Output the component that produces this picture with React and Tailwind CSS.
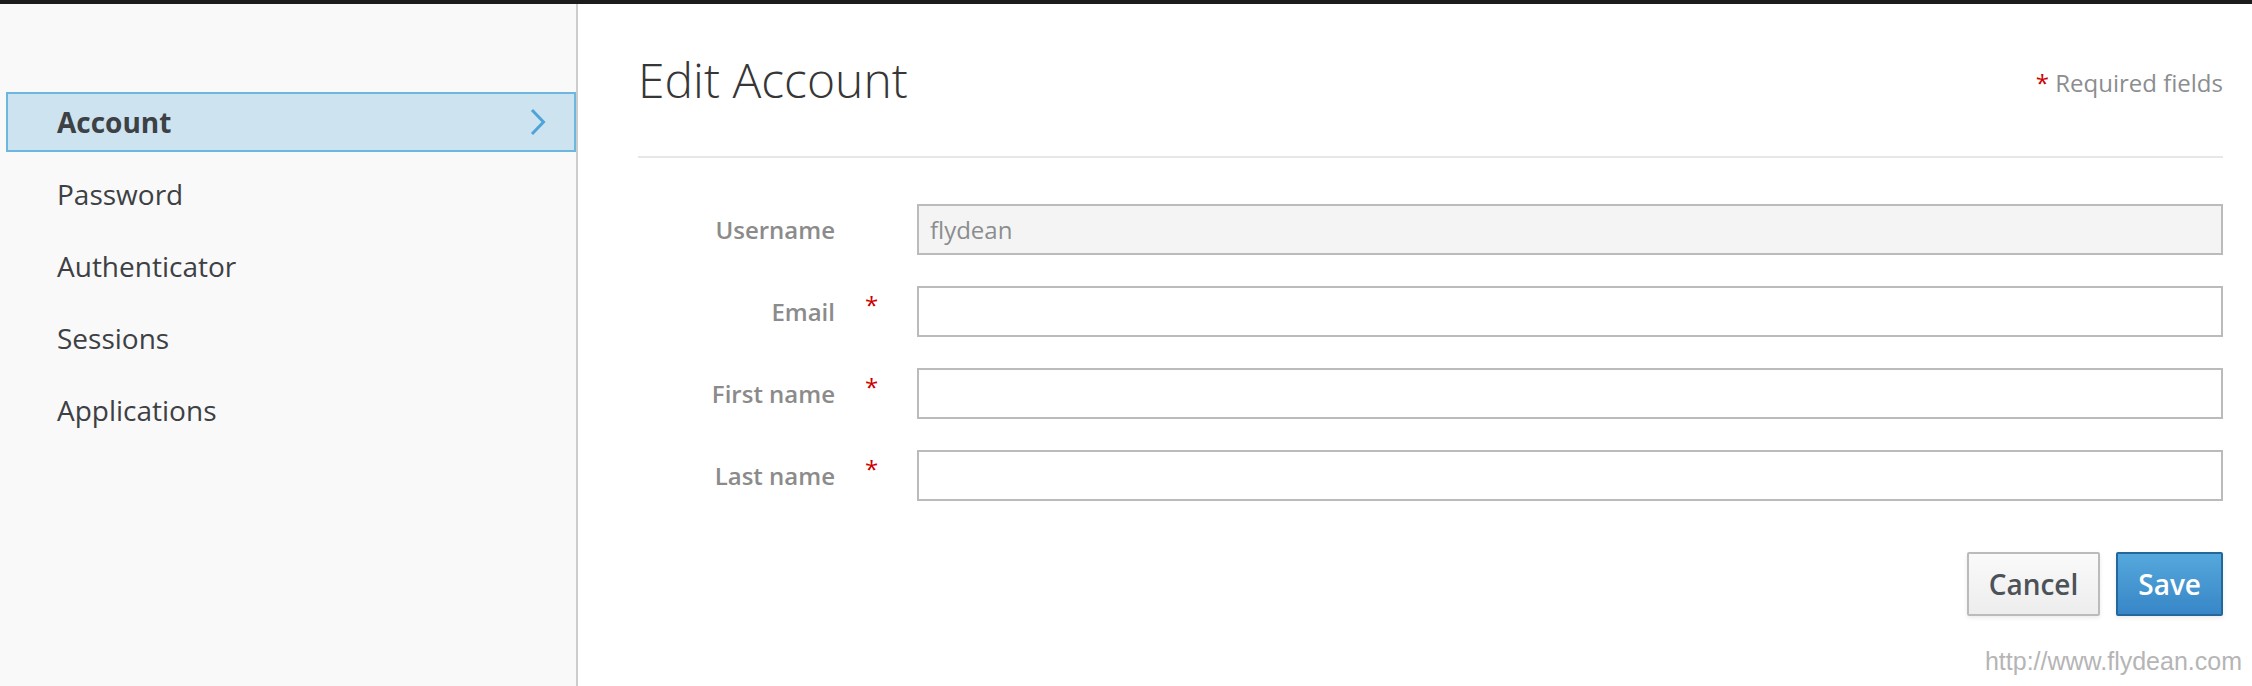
import React from 'react';

const MENU = ['Account', 'Password', 'Authenticator', 'Sessions', 'Applications'];

const FIELDS = [
  { id: 'username', label: 'Username', value: 'flydean', required: false, readOnly: true },
  { id: 'email', label: 'Email', value: '', required: true },
  { id: 'firstName', label: 'First name', value: '', required: true },
  { id: 'lastName', label: 'Last name', value: '', required: true },
];

function Chevron() {
  return (
    <svg width="16" height="28" viewBox="0 0 16 28" fill="none">
      <polyline points="2,2 13.5,14 2,26" stroke="#4ea4d9" strokeWidth="3" />
    </svg>
  );
}

function Sidebar({ active }) {
  return (
    <aside className="w-[578px] shrink-0 bg-[#f9f9f9] border-r-2 border-[#cdcdcd] pt-[88px]">
      <ul className="flex flex-col gap-[12px] pl-[6px]">
        {MENU.map((item) =>
          item === active ? (
            <li
              key={item}
              className="h-[60px] flex items-center justify-between border-2 border-[#6bb7dd] bg-[#cde3ef] pl-[49px] pr-[28px] text-[28px] font-bold text-[#3d4044]"
            >
              <span>{item}</span>
              <Chevron />
            </li>
          ) : (
            <li
              key={item}
              className="h-[60px] flex items-center border-2 border-transparent pl-[49px] text-[28px] text-[#3d4044]"
            >
              {item}
            </li>
          )
        )}
      </ul>
    </aside>
  );
}

export default function App() {
  return (
    <div className="relative w-[2252px] h-[686px] flex flex-col bg-white font-['Open_Sans',sans-serif] overflow-hidden">
      <div className="h-[4px] bg-[#1c1c1c] shrink-0" />
      <div className="flex flex-1">
        <Sidebar active="Account" />

        <main className="flex-1 pl-[60px] pr-[29px]">
          {/* page header */}
          <div className="flex justify-between items-start border-b-2 border-[#e7e7e7] pt-[49px] pb-[50px]">
            <h1 className="text-[48px] leading-[53px] font-light text-[#363636]">Edit Account</h1>
            <div className="mt-[13px] text-[24px] leading-[33px] text-[#8b8d8f]">
              <span className="text-[#cc0000]">*</span> Required fields
            </div>
          </div>

          <form className="pt-[46px]">
            <div className="flex flex-col gap-[31px]">
              {FIELDS.map((f) => (
                <div key={f.id} className="flex h-[51px]">
                  <label
                    htmlFor={f.id}
                    className="w-[197px] shrink-0 flex items-center justify-end text-[24px] font-semibold text-[#8b8b8b]"
                  >
                    {f.label}
                  </label>
                  <div className="w-[82px] shrink-0 pl-[30px] pt-[2px] text-[24px] leading-[33px] text-[#cc0000]">
                    {f.required ? '*' : ''}
                  </div>
                  <input
                    id={f.id}
                    type="text"
                    defaultValue={f.value}
                    readOnly={f.readOnly}
                    className={
                      'flex-1 h-[51px] border-2 border-[#bbbbbb] px-[11px] text-[24px] text-[#8b8d8f] outline-none ' +
                      (f.readOnly ? 'bg-[#f4f4f4]' : 'bg-white')
                    }
                  />
                </div>
              ))}
            </div>

            <div className="flex justify-end gap-[16px] mt-[51px]">
              <button
                type="button"
                className="h-[64px] px-[20px] border-2 border-[#bbbbbb] rounded-[2px] bg-gradient-to-b from-[#fafafa] to-[#ededed] text-[28px] font-semibold text-[#4d5258] shadow-[0_2px_4px_rgba(0,0,0,0.08)]"
              >
                Cancel
              </button>
              <button
                type="submit"
                className="h-[64px] px-[20px] border-2 border-[#23679c] rounded-[2px] bg-gradient-to-b from-[#55a8dc] to-[#3886c7] text-[28px] font-semibold text-white shadow-[0_2px_4px_rgba(0,0,0,0.08)]"
              >
                Save
              </button>
            </div>
          </form>
        </main>
      </div>

      <div className="absolute right-[10px] bottom-[10px] font-['Liberation_Sans',Arial,sans-serif] text-[25px] leading-[29px] text-[#b5b5b5]">
        http://www.flydean.com
      </div>
    </div>
  );
}
